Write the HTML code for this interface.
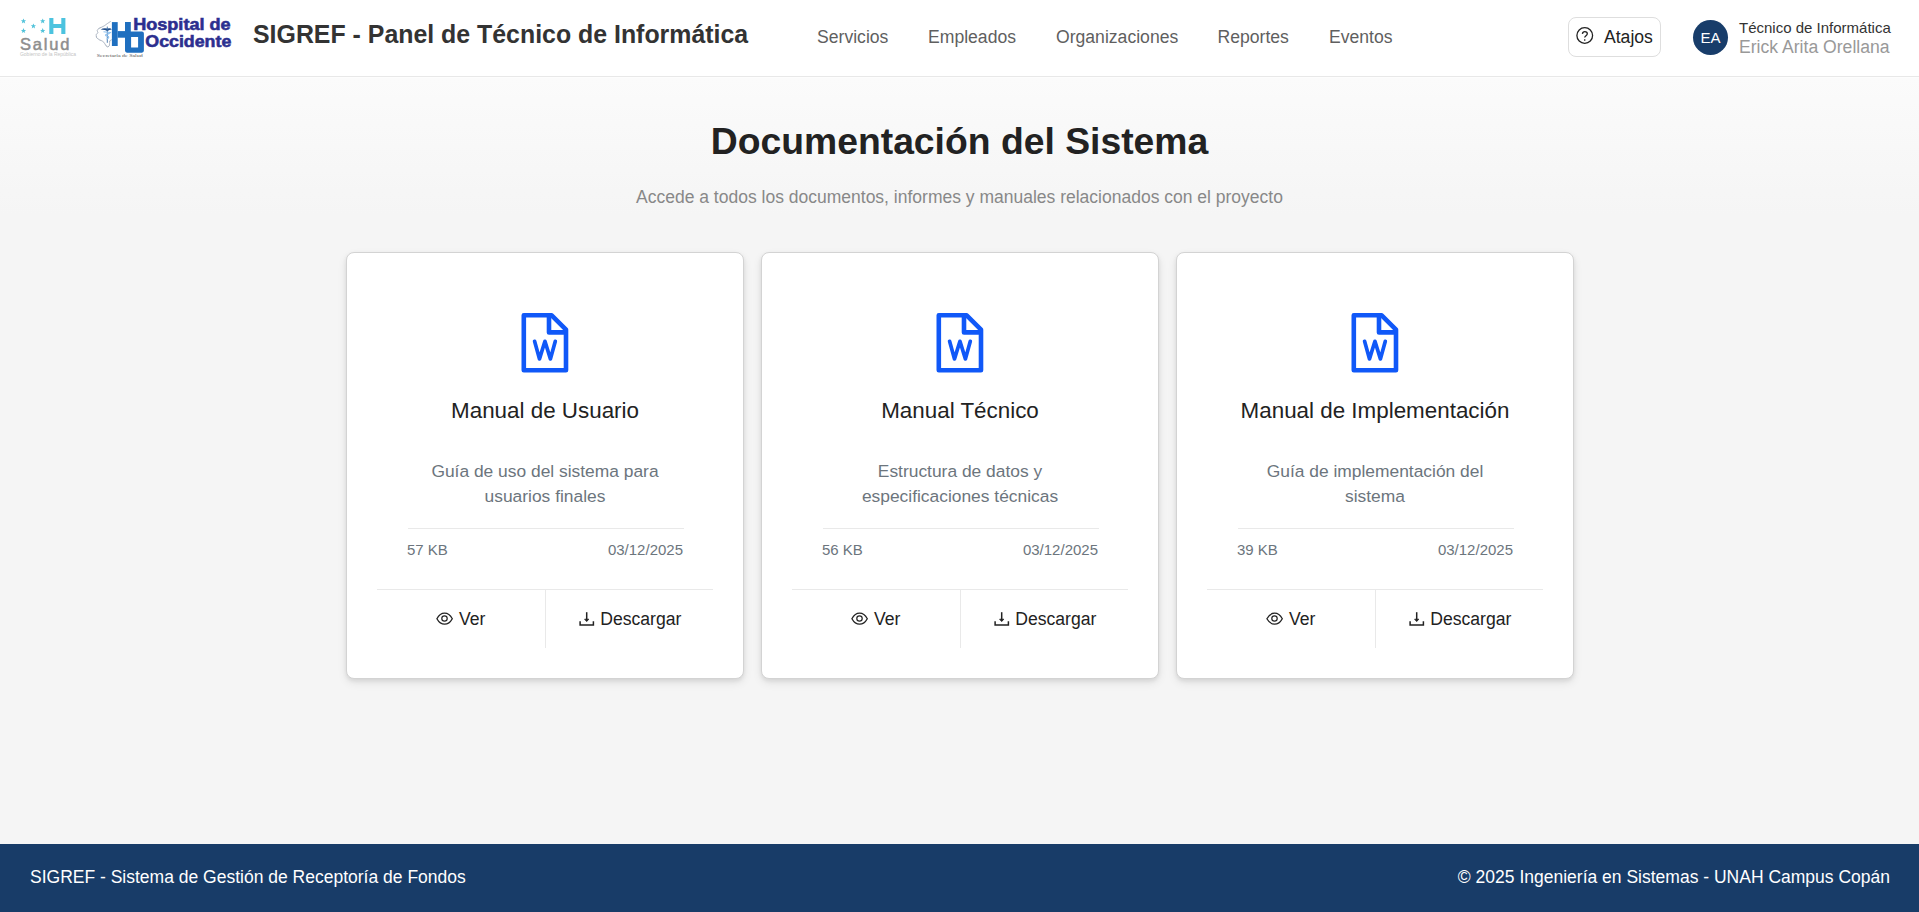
<!DOCTYPE html>
<html lang="es">
<head>
<meta charset="utf-8">
<title>SIGREF - Documentación</title>
<style>
*{box-sizing:border-box;margin:0;padding:0}
html,body{width:1919px;height:912px;overflow:hidden}
body{font-family:"Liberation Sans",sans-serif;background:linear-gradient(180deg,#fbfbfb 78px,#f5f5f5 215px,#f5f5f5 100%);color:#222;position:relative}
.hl{position:absolute;left:0;top:77px;width:1919px;height:1px;background:#fdfdfd}
.hdr{position:absolute;left:0;top:0;width:1919px;height:77px;background:#fff;border-bottom:1px solid #e8e8e8}
.logos{position:absolute;left:0;top:0}
.title{position:absolute;left:253px;top:19px;font-size:24.9px;font-weight:bold;color:#333;white-space:nowrap;line-height:30px}
.nav{position:absolute;top:26px;font-size:17.6px;color:#5f5f5f;white-space:nowrap;line-height:22px}
.atajos{position:absolute;left:1568px;top:17px;width:93px;height:40px;border:1px solid #dedede;border-radius:8px;background:#fff}
.atajos span{position:absolute;left:35px;top:7.7px;font-size:17.6px;color:#222;line-height:22px}
.atajos svg{position:absolute;left:-1px;top:-1px}
.avatar{position:absolute;left:1693px;top:20px;width:35px;height:35px;border-radius:50%;background:#183d6a;color:#fff;font-size:15px;text-align:center;line-height:35px}
.u1{position:absolute;left:1739px;top:18.6px;font-size:15px;color:#333;line-height:18px;white-space:nowrap}
.u2{position:absolute;left:1739px;top:35.6px;font-size:17.6px;color:#999;line-height:22px;white-space:nowrap}
h1{position:absolute;left:0;width:1919px;top:118.8px;text-align:center;font-size:37.3px;font-weight:bold;color:#222;line-height:44px;white-space:nowrap}
.sub{position:absolute;left:0;width:1919px;top:185.8px;text-align:center;font-size:17.5px;color:#888;line-height:22px;white-space:nowrap}
.card{position:absolute;top:252px;width:398px;height:427px;background:#fff;border:1px solid #d3d3d3;border-radius:8px;box-shadow:0 2px 4px rgba(0,0,0,.08),0 4px 10px rgba(0,0,0,.08)}
.card .cs{position:absolute;left:0;top:0}
.card .ct{position:absolute;left:0;width:396px;top:144.1px;text-align:center;font-size:22.4px;color:#222;line-height:28px;white-space:nowrap}
.card .cd{position:absolute;left:0;width:396px;top:206.2px;text-align:center;font-size:17.4px;color:#6c757d;line-height:24.64px;white-space:nowrap}
.card .hr1{position:absolute;left:60.5px;width:276px;top:275px;height:1px;background:#e9e9e9}
.card .sz{position:absolute;left:60px;top:287.6px;font-size:15px;color:#6c757d;line-height:18px}
.card .dt{position:absolute;right:60px;top:287.6px;font-size:15px;color:#6c757d;line-height:18px}
.card .hr2{position:absolute;left:30px;width:336px;top:336px;height:1px;background:#e9e9e9}
.card .vr{position:absolute;left:198px;width:1px;top:336px;height:59px;background:#e9e9e9}
.card .b1{position:absolute;left:112px;top:354.8px;font-size:17.6px;color:#222;line-height:22px}
.card .b2{position:absolute;left:253.2px;top:354.8px;font-size:17.6px;color:#222;line-height:22px}
.ftr{position:absolute;left:0;top:844px;width:1919px;height:68px;background:#183c68;color:#fff;font-size:17.5px;line-height:22px}
.ftr .l{position:absolute;left:30px;top:21.8px;white-space:nowrap}
.ftr .r{position:absolute;right:29px;top:21.8px;white-space:nowrap}
</style>
</head>
<body>
<div class="hdr">
  <svg class="logos" width="250" height="76" viewBox="0 0 250 76">
  <defs><path id="st" d="M0,-2.7L0.8,-0.85L2.6,-0.85L1.15,0.35L1.65,2.2L0,1.1L-1.65,2.2L-1.15,0.35L-2.6,-0.85L-0.8,-0.85Z"/></defs>
  <g fill="#52c3da">
    <use href="#st" x="23.5" y="21.2"/><use href="#st" x="42.7" y="21.2"/><use href="#st" x="33.4" y="26.2"/>
    <use href="#st" x="23.5" y="30.8"/><use href="#st" x="42.7" y="30.8"/>
  </g>
  <path d="M49.3 18H53.4V24H61.3V18H65.4V34H61.3V27.9H53.4V34H49.3Z" fill="#4cc3df"/>
  <text x="20" y="49.8" font-family="Liberation Sans" font-size="16.5" fill="#8e8e8e" stroke="#8e8e8e" stroke-width="0.5" textLength="49.5" lengthAdjust="spacing">Salud</text>
  <text x="20" y="56" font-family="Liberation Sans" font-size="5.2" fill="#c4c4c4" textLength="56" lengthAdjust="spacingAndGlyphs">Gobierno de la República</text>
  <path d="M110.5 21.5L107.3 23.6L104.5 25.7L101 27.5L98.6 28.5L97.2 30.6L97.9 32.7L96.1 34.8L96.5 37.6L99.3 39.8L102.8 41.2L104.5 43.3L106.3 46.1L108 47.1L109.4 45.4L109.8 40.8L111.5 39.8" fill="none" stroke="#65758c" stroke-width="0.75" stroke-dasharray="0.9 0.35"/>
  <path d="M100.7 29.6Q103.5 27.6 107.3 28.6Q110.8 27.6 111.8 29.6Q109 29.6 107.3 31.2Q105.5 29.6 100.7 29.6Z" fill="#1f4d8a"/>
  <path d="M107.3 26.6V42.8" stroke="#3d6fa8" stroke-width="0.9"/>
  <path d="M103.5 31.8Q108 32.3 110.3 32.5Q108.5 34.2 106.2 34.5Q104 35.5 108.5 36.5Q109.5 37.8 106.6 39.2" fill="none" stroke="#8fc2ef" stroke-width="1.1"/>
  <g fill="#1f6fbf">
    <rect x="111.9" y="22.1" width="5.8" height="23.9"/>
    <rect x="117.7" y="31.1" width="7.3" height="6.6"/>
    <path d="M125 22.1H130.8V31.4H141.9Q143.9 31.4 143.9 33.4V50.6Q143.9 52.7 141.9 52.7H127Q125 52.7 125 50.6ZM131.1 36.9V47.5H138.1V36.9Z" fill-rule="evenodd"/>
  </g>
  <text x="96.8" y="56.9" font-family="Liberation Serif" font-size="4.6" fill="#555" textLength="45.9" lengthAdjust="spacingAndGlyphs">Secretaría de Salud</text>
  <g font-family="Liberation Sans" font-weight="bold" font-size="16" fill="#2c2f8f" stroke="#2c2f8f" stroke-width="0.55">
    <text x="133.2" y="29.5" textLength="97.4" lengthAdjust="spacingAndGlyphs">Hospital de</text>
    <text x="145.3" y="46.6" textLength="86" lengthAdjust="spacingAndGlyphs">Occidente</text>
  </g>
</svg>
  <div class="title">SIGREF - Panel de Técnico de Informática</div>
  <div class="nav" style="left:817px">Servicios</div>
  <div class="nav" style="left:928px">Empleados</div>
  <div class="nav" style="left:1056px">Organizaciones</div>
  <div class="nav" style="left:1217.5px">Reportes</div>
  <div class="nav" style="left:1329px">Eventos</div>
  <div class="atajos">
    <svg width="40" height="40" viewBox="1568 17 40 40"><circle cx="1584.75" cy="35.5" r="7.85" fill="none" stroke="#222" stroke-width="1.3"/><path d="M1582.4 33.8C1582.6 32.2 1583.6 31.6 1584.8 31.6C1586.2 31.6 1587.3 32.5 1587.3 33.8C1587.3 35.5 1584.7 36 1584.7 37.6" fill="none" stroke="#222" stroke-width="1.3"/><rect x="1584" y="39.3" width="1.4" height="1.4" fill="#222"/></svg>
    <span>Atajos</span>
  </div>
  <div class="avatar">EA</div>
  <div class="u1">Técnico de Informática</div>
  <div class="u2">Erick Arita Orellana</div>
</div>
<div class="hl"></div>
<h1>Documentación del Sistema</h1>
<div class="sub">Accede a todos los documentos, informes y manuales relacionados con el proyecto</div>
<div class="card" style="left:346px">
  <svg class="cs" width="396" height="425" viewBox="0 0 396 425">
    <path d="M176.8 62.3H204.65L219 76.65V117.2H176.8Z" fill="none" stroke="#1058f8" stroke-width="4.6" stroke-linejoin="round"/>
    <path d="M202 62.3V79.4H219" fill="none" stroke="#1058f8" stroke-width="4.6" stroke-linejoin="round"/>
    <path d="M187.6 88.3L192.5 105.9L197.95 88.3L203.4 105.9L208.3 88.3" fill="none" stroke="#1058f8" stroke-width="3.7" stroke-linecap="round" stroke-linejoin="round"/>
    <path d="M89.9 365.7C92.5 361 95 360.2 97.6 360.2C100.2 360.2 102.7 361 105.3 365.7C102.7 370.4 100.2 371.2 97.6 371.2C95 371.2 92.5 370.4 89.9 365.7Z" fill="none" stroke="#222" stroke-width="1.3"/>
    <circle cx="97.5" cy="365.5" r="2.7" fill="none" stroke="#222" stroke-width="1.2"/>
    <path d="M239.7 359.2V367.8" fill="none" stroke="#222" stroke-width="1.5"/>
    <path d="M237.6 366.2L239.7 368.6L241.8 366.2Z" fill="#222" stroke="#222" stroke-width="0.8" stroke-linejoin="round"/>
    <path d="M233.1 368.3V371.9H246.4V368.3" fill="none" stroke="#222" stroke-width="1.5"/>
  </svg>
  <div class="ct">Manual de Usuario</div>
  <div class="cd">Guía de uso del sistema para<br>usuarios finales</div>
  <div class="hr1"></div>
  <div class="sz">57 KB</div><div class="dt">03/12/2025</div>
  <div class="hr2"></div><div class="vr"></div>
  <div class="b1">Ver</div><div class="b2">Descargar</div>
</div>
<div class="card" style="left:761px">
  <svg class="cs" width="396" height="425" viewBox="0 0 396 425">
    <path d="M176.8 62.3H204.65L219 76.65V117.2H176.8Z" fill="none" stroke="#1058f8" stroke-width="4.6" stroke-linejoin="round"/>
    <path d="M202 62.3V79.4H219" fill="none" stroke="#1058f8" stroke-width="4.6" stroke-linejoin="round"/>
    <path d="M187.6 88.3L192.5 105.9L197.95 88.3L203.4 105.9L208.3 88.3" fill="none" stroke="#1058f8" stroke-width="3.7" stroke-linecap="round" stroke-linejoin="round"/>
    <path d="M89.9 365.7C92.5 361 95 360.2 97.6 360.2C100.2 360.2 102.7 361 105.3 365.7C102.7 370.4 100.2 371.2 97.6 371.2C95 371.2 92.5 370.4 89.9 365.7Z" fill="none" stroke="#222" stroke-width="1.3"/>
    <circle cx="97.5" cy="365.5" r="2.7" fill="none" stroke="#222" stroke-width="1.2"/>
    <path d="M239.7 359.2V367.8" fill="none" stroke="#222" stroke-width="1.5"/>
    <path d="M237.6 366.2L239.7 368.6L241.8 366.2Z" fill="#222" stroke="#222" stroke-width="0.8" stroke-linejoin="round"/>
    <path d="M233.1 368.3V371.9H246.4V368.3" fill="none" stroke="#222" stroke-width="1.5"/>
  </svg>
  <div class="ct">Manual Técnico</div>
  <div class="cd">Estructura de datos y<br>especificaciones técnicas</div>
  <div class="hr1"></div>
  <div class="sz">56 KB</div><div class="dt">03/12/2025</div>
  <div class="hr2"></div><div class="vr"></div>
  <div class="b1">Ver</div><div class="b2">Descargar</div>
</div>
<div class="card" style="left:1176px">
  <svg class="cs" width="396" height="425" viewBox="0 0 396 425">
    <path d="M176.8 62.3H204.65L219 76.65V117.2H176.8Z" fill="none" stroke="#1058f8" stroke-width="4.6" stroke-linejoin="round"/>
    <path d="M202 62.3V79.4H219" fill="none" stroke="#1058f8" stroke-width="4.6" stroke-linejoin="round"/>
    <path d="M187.6 88.3L192.5 105.9L197.95 88.3L203.4 105.9L208.3 88.3" fill="none" stroke="#1058f8" stroke-width="3.7" stroke-linecap="round" stroke-linejoin="round"/>
    <path d="M89.9 365.7C92.5 361 95 360.2 97.6 360.2C100.2 360.2 102.7 361 105.3 365.7C102.7 370.4 100.2 371.2 97.6 371.2C95 371.2 92.5 370.4 89.9 365.7Z" fill="none" stroke="#222" stroke-width="1.3"/>
    <circle cx="97.5" cy="365.5" r="2.7" fill="none" stroke="#222" stroke-width="1.2"/>
    <path d="M239.7 359.2V367.8" fill="none" stroke="#222" stroke-width="1.5"/>
    <path d="M237.6 366.2L239.7 368.6L241.8 366.2Z" fill="#222" stroke="#222" stroke-width="0.8" stroke-linejoin="round"/>
    <path d="M233.1 368.3V371.9H246.4V368.3" fill="none" stroke="#222" stroke-width="1.5"/>
  </svg>
  <div class="ct">Manual de Implementación</div>
  <div class="cd">Guía de implementación del<br>sistema</div>
  <div class="hr1"></div>
  <div class="sz">39 KB</div><div class="dt">03/12/2025</div>
  <div class="hr2"></div><div class="vr"></div>
  <div class="b1">Ver</div><div class="b2">Descargar</div>
</div>
<div class="ftr">
  <div class="l">SIGREF - Sistema de Gestión de Receptoría de Fondos</div>
  <div class="r">© 2025 Ingeniería en Sistemas - UNAH Campus Copán</div>
</div>
</body>
</html>
